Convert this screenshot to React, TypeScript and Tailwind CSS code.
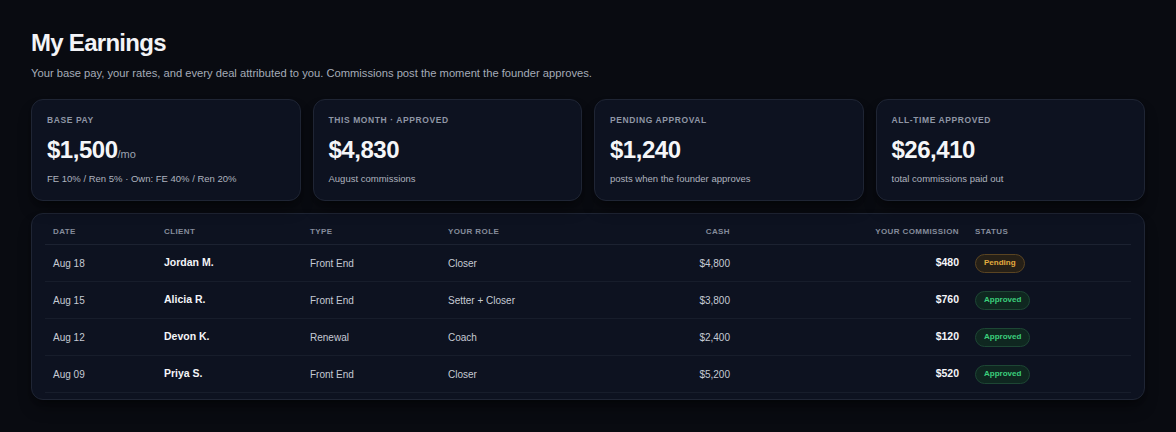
const stats = [
  { label: "BASE PAY", value: "$1,500", suffix: "/mo", note: "FE 10% / Ren 5% · Own: FE 40% / Ren 20%" },
  { label: "THIS MONTH · APPROVED", value: "$4,830", note: "August commissions" },
  { label: "PENDING APPROVAL", value: "$1,240", note: "posts when the founder approves" },
  { label: "ALL-TIME APPROVED", value: "$26,410", note: "total commissions paid out" },
];

const deals = [
  { date: "Aug 18", client: "Jordan M.", type: "Front End", role: "Closer", cash: "$4,800", commission: "$480", status: "Pending" },
  { date: "Aug 15", client: "Alicia R.", type: "Front End", role: "Setter + Closer", cash: "$3,800", commission: "$760", status: "Approved" },
  { date: "Aug 12", client: "Devon K.", type: "Renewal", role: "Coach", cash: "$2,400", commission: "$120", status: "Approved" },
  { date: "Aug 09", client: "Priya S.", type: "Front End", role: "Closer", cash: "$5,200", commission: "$520", status: "Approved" },
];

function StatusBadge({ status }: { status: string }) {
  if (status === "Pending") {
    return (
      <span className="inline-flex h-[19px] items-center rounded-full border border-[#5a4422] bg-[#262017] px-[8px] text-[8px] font-bold text-[#e3ac3f]">
        Pending
      </span>
    );
  }
  return (
    <span className="inline-flex h-[19px] items-center rounded-full border border-[#1d4634] bg-[#0f2720] px-[8px] text-[8px] font-bold text-[#3ccf7c]">
      Approved
    </span>
  );
}

export default function App() {
  return (
    <div
      className="min-h-[432px] w-full bg-[#090b11] px-[31px] pt-[29px] text-white"
      style={{ fontFamily: '"Liberation Sans", Arial, sans-serif' }}
    >
      {/* Header */}
      <h1 className="text-[24px] font-bold leading-[28px] tracking-[-0.03em] text-[#f3f4f7]">My Earnings</h1>
      <p className="mt-[8px] text-[11.2px] text-[#a5abb8]">
        Your base pay, your rates, and every deal attributed to you. Commissions post the moment the founder approves.
      </p>

      {/* Stat cards */}
      <div className="mt-[17px] grid grid-cols-4 gap-[12px]">
        {stats.map((s) => (
          <div
            key={s.label}
            className="h-[102px] rounded-[12px] border border-[#1f2534] bg-[#0d1220] px-[15px] pt-[14px] shadow-lg shadow-black/40"
          >
            <div className="text-[8.5px] font-bold tracking-[0.07em] text-[#8f96a5]">{s.label}</div>
            <div className="mt-[9px] flex items-baseline">
              <span className="text-[24px] font-bold leading-[28px] tracking-[-0.02em] text-[#f5f6f8]">{s.value}</span>
              {s.suffix && <span className="text-[11px] font-medium text-[#9ca3b0]">{s.suffix}</span>}
            </div>
            <div className="mt-[8px] text-[9.5px] text-[#adb3bf]">{s.note}</div>
          </div>
        ))}
      </div>

      {/* Deals table */}
      <div className="mt-[12px] rounded-[12px] border border-[#1f2534] bg-[#0d1220] px-[13px] pb-[6px] pt-[5px] shadow-lg shadow-black/40">
        <table className="w-full table-fixed border-collapse">
          <colgroup>
            <col className="w-[111px]" />
            <col className="w-[146px]" />
            <col className="w-[138px]" />
            <col className="w-[160px]" />
            <col className="w-[138px]" />
            <col className="w-[229px]" />
            <col className="w-[164px]" />
          </colgroup>
          <thead>
            <tr className="h-[26px] border-b border-[#1c2231] text-[8px] font-bold tracking-[0.05em] text-[#858c9b]">
              <th className="px-[8px] text-left">DATE</th>
              <th className="px-[8px] text-left">CLIENT</th>
              <th className="px-[8px] text-left">TYPE</th>
              <th className="px-[8px] text-left">YOUR ROLE</th>
              <th className="px-[8px] text-right">CASH</th>
              <th className="px-[8px] text-right">YOUR COMMISSION</th>
              <th className="px-[8px] text-left">STATUS</th>
            </tr>
          </thead>
          <tbody>
            {deals.map((d) => (
              <tr key={d.date} className="h-[37px] border-b border-[#171d2b] text-[10px] text-[#c5cad4]">
                <td className="px-[8px]">{d.date}</td>
                <td className="px-[8px] text-[10.5px] font-bold text-[#f4f5f8]">{d.client}</td>
                <td className="px-[8px]">{d.type}</td>
                <td className="px-[8px]">{d.role}</td>
                <td className="px-[8px] text-right">{d.cash}</td>
                <td className="px-[8px] text-right text-[10.5px] font-bold text-[#f4f5f8]">{d.commission}</td>
                <td className="px-[8px]">
                  <StatusBadge status={d.status} />
                </td>
              </tr>
            ))}
          </tbody>
        </table>
      </div>
    </div>
  );
}
